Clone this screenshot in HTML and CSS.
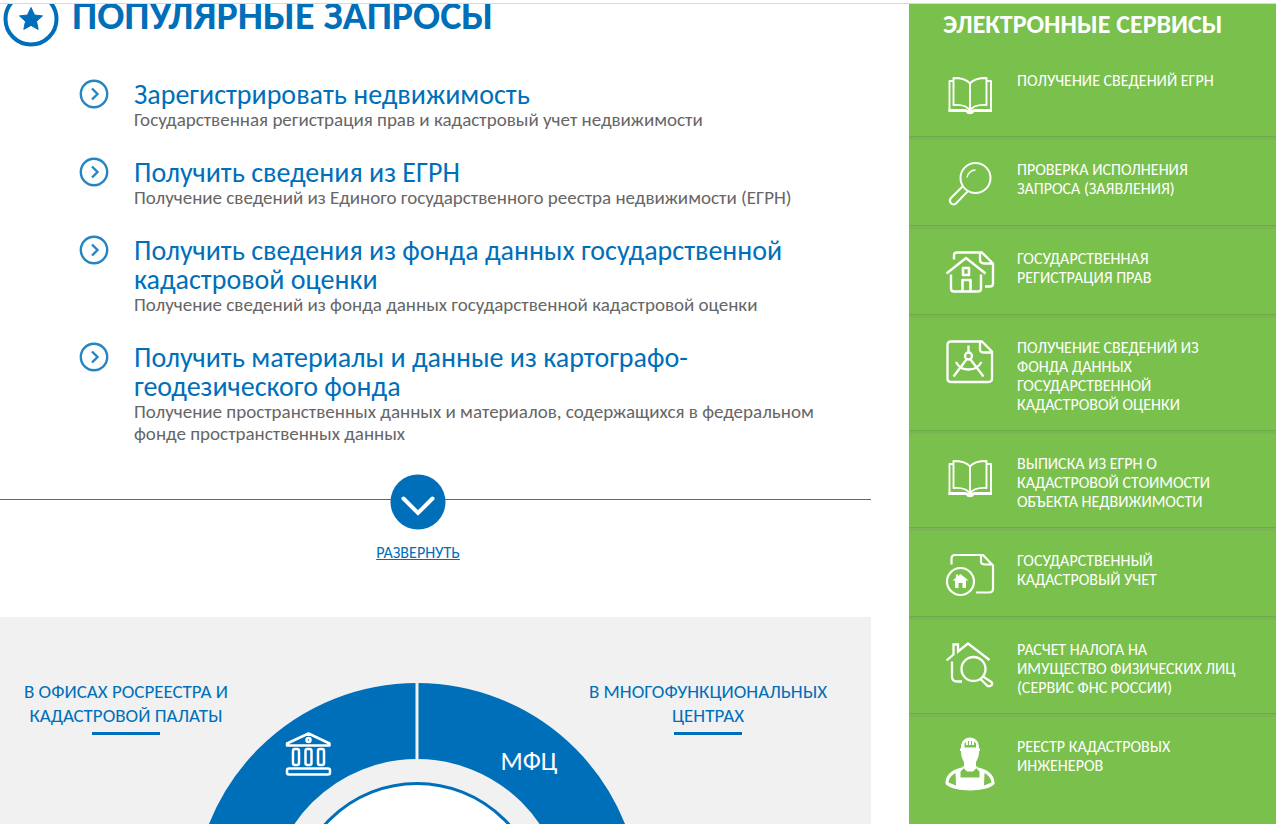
FILE: index.html
```html
<!DOCTYPE html>
<html lang="ru">
<head>
<meta charset="utf-8">
<title>Популярные запросы</title>
<link rel="stylesheet" href="styles.css">
</head>
<body>
<svg class="sprite" aria-hidden="true">
  <symbol id="go" viewBox="0 0 30 30"><circle cx="15" cy="15" r="13.2" fill="none" stroke="#2585c2" stroke-width="2.4"/><path d="M13 9.500l5.500 5.500-5.500 5.500" fill="none" stroke="#2585c2" stroke-width="2.4"/></symbol>
  <symbol id="book" viewBox="0 0 50 48"><path d="M25 12C22 8 16 6.500 8.500 6.500V33.500C16 33 22 34 25 39C28 34 34 33 41.500 33.500V6.500C34 6.500 28 8 25 12V39M8.500 9.500H4.500V39.500H46V9.500H41.500" fill="none" stroke="#fff" stroke-width="1.900" stroke-linejoin="round"/><path d="M3.500 37.500H21L25 39.500L29 37.500H47V40.500H29C28 43.500 22 43.500 21 40.500H3.500z" fill="#fff"/></symbol>
</svg>
<div class="page">
  <main class="main">
    <header class="head">
      <svg class="head-icon" viewBox="0 0 56 56" aria-hidden="true"><circle cx="28" cy="28" r="25.500" fill="none" stroke="#006fba" stroke-width="4"/><path d="M28 16.500l3.500 7.500 8 .900-6 5.500 1.700 8L28 34.400l-7.200 4 1.700-8-6-5.500 8-.900z" fill="#006fba" stroke="#006fba" stroke-linejoin="round"/></svg>
      <h1>ПОПУЛЯРНЫЕ ЗАПРОСЫ</h1>
    </header>
    <ul class="requests">
      <li><svg class="go"><use href="#go"/></svg><div><a href="#">Зарегистрировать недвижимость</a><p>Государственная регистрация прав и кадастровый учет недвижимости</p></div></li>
      <li><svg class="go"><use href="#go"/></svg><div><a href="#">Получить сведения из ЕГРН</a><p>Получение сведений из Единого государственного реестра недвижимости (ЕГРН)</p></div></li>
      <li><svg class="go"><use href="#go"/></svg><div><a href="#">Получить сведения из фонда данных государственной<br>кадастровой оценки</a><p>Получение сведений из фонда данных государственной кадастровой оценки</p></div></li>
      <li><svg class="go"><use href="#go"/></svg><div><a href="#">Получить материалы и данные из картографо-<br>геодезического фонда</a><p>Получение пространственных данных и материалов, содержащихся в федеральном<br>фонде пространственных данных</p></div></li>
    </ul>
    <div class="more">
      <div class="more-line">
        <svg class="more-icon" viewBox="0 0 56 56" aria-hidden="true"><circle cx="28" cy="28" r="27.500" fill="#006fba"/><path d="M13.500 24.500l14.500 14.500 14.500-14.500" fill="none" stroke="#fff" stroke-width="4" stroke-linecap="round"/></svg>
      </div>
      <a href="#">РАЗВЕРНУТЬ</a>
    </div>
    <section class="places">
      <svg class="ring" viewBox="0 0 450 141" role="img" aria-label="Способы обращения">
        <circle cx="225" cy="224" r="186" fill="none" stroke="#006fba" stroke-width="76"/>
        <path d="M225 0V76" stroke="#f1f1f1" stroke-width="3"/>
        <circle cx="225" cy="224" r="123.500" fill="#fff" stroke="#006fba" stroke-width="3"/>
        <g fill="none" stroke="#fff" stroke-width="2.500" stroke-linejoin="round">
          <path d="M95 62.500v-2L116.500 50.500l21 10v2z"/><circle cx="116.500" cy="57" r="2"/>
          <rect x="101" y="66" width="6" height="16" rx="2"/><rect x="113.500" y="66" width="6" height="16" rx="2"/><rect x="126" y="66" width="6" height="16" rx="2"/>
          <rect x="95" y="85.500" width="43" height="6" rx="2"/>
        </g>
        <text class="ring-text" x="337" y="87" text-anchor="middle">МФЦ</text>
      </svg>
      <div class="labels">
        <a href="#">В ОФИСАХ РОСРЕЕСТРА И КАДАСТРОВОЙ ПАЛАТЫ</a>
        <a href="#">В МНОГОФУНКЦИОНАЛЬНЫХ ЦЕНТРАХ</a>
      </div>
    </section>
  </main>
  <aside class="side">
    <h2>ЭЛЕКТРОННЫЕ СЕРВИСЫ</h2>
    <nav>
      <a href="#"><svg viewBox="0 0 50 48"><use href="#book"/></svg><span>ПОЛУЧЕНИЕ СВЕДЕНИЙ ЕГРН</span></a>
      <a href="#"><svg viewBox="0 0 50 48"><g fill="none" stroke="#fff" stroke-width="2"><circle cx="30.500" cy="17.500" r="15"/><path d="M22 17C22.500 13 26 9.500 30.500 9.500" stroke-width="1.500"/><path d="M17.500 26L6 37.500C3 41 7 46 11 43L22.500 31"/></g></svg><span>ПРОВЕРКА ИСПОЛНЕНИЯ<br>ЗАПРОСА (ЗАЯВЛЕНИЯ)</span></a>
      <a href="#"><svg viewBox="0 0 50 48"><g fill="none" stroke="#fff" stroke-width="2.400" stroke-linejoin="round"><path d="M9 10V6Q9 3 12 3H37L48 14V34Q48 37 45 37H40M35 3V10Q35 14 39 14H48"/><path d="M1.500 24L21 8.500L40.500 24M6 25V39Q6 42 9 42H33Q36 42 36 39V25"/><path d="M18 18.500h6v7h-6zM17.500 42V30.500h8V42" stroke-width="2.600"/></g></svg><span>ГОСУДАРСТВЕННАЯ<br>РЕГИСТРАЦИЯ ПРАВ</span></a>
      <a href="#"><svg viewBox="0 0 50 48"><g fill="none" stroke="#fff" stroke-width="2.300" stroke-linejoin="round"><path d="M6 3H37L47 13V40Q47 43.500 43 43.500H6Q2.500 43.500 2.500 40V6Q2.500 3 6 3zM35 3V11Q35 14 39 14H47"/><circle cx="23.500" cy="17.500" r="3.500"/><path d="M23.500 7V14M21.500 21L8.500 38M25.500 21L38.500 38M11 23.500C16 33.500 31 33.500 36.500 23.500"/></g></svg><span>ПОЛУЧЕНИЕ СВЕДЕНИЙ ИЗ<br>ФОНДА ДАННЫХ<br>ГОСУДАРСТВЕННОЙ<br>КАДАСТРОВОЙ ОЦЕНКИ</span></a>
      <a href="#"><svg viewBox="0 0 50 48"><use href="#book"/></svg><span>ВЫПИСКА ИЗ ЕГРН О<br>КАДАСТРОВОЙ СТОИМОСТИ<br>ОБЪЕКТА НЕДВИЖИМОСТИ</span></a>
      <a href="#"><svg viewBox="0 0 50 48"><g fill="none" stroke="#fff" stroke-width="2.200" stroke-linejoin="round"><path d="M6.500 13V7Q6.500 3.500 10 3.500H38L48 14V37Q48 41 44 41H31M36 3.500V10Q36 13 40 13H48"/><circle cx="15.500" cy="30" r="13.500"/></g><path d="M15.500 22.500L23.500 29H21V36.500H17.500V31.500H13.500V36.500H10V29H7.500L11 26V23H13V24.500z" fill="#fff"/></svg><span>ГОСУДАРСТВЕННЫЙ<br>КАДАСТРОВЫЙ УЧЕТ</span></a>
      <a href="#"><svg viewBox="0 0 50 48"><g fill="none" stroke="#fff" stroke-width="2.300"><path d="M1.500 20L8.500 14V4H13V11L23 3L44.500 19.500M7 21V36Q7 41 12 41H17"/><circle cx="28.500" cy="28.500" r="12"/><path d="M38 36L46.500 41.500C49 45 43.500 47 41.500 44.500L35 38"/></g></svg><span>РАСЧЕТ НАЛОГА НА<br>ИМУЩЕСТВО ФИЗИЧЕСКИХ ЛИЦ<br>(СЕРВИС ФНС РОССИИ)</span></a>
      <a href="#"><svg class="tall" viewBox="0 0 50 56"><path fill="#fff" fill-rule="evenodd" d="M16 11C16 4 20 .500 25 .500S34 4 34 11L35 12V14H34C34 21 31.500 23.500 31 25V30C40 31.500 50 36 49.500 47C42 55.500 8 55.500 .500 47C0 36 10 31.500 19 30V25C18.500 23.500 16 21 16 14H15V12zM19.500 6.500V10.500H31V6.500L29 4.500V8H27V4H26V8H24V4H23V8H21V5zM15.500 34.500V40.500H34.500V34.500L31 31H19zM10.500 36C7 38 4 41 3.500 45.500L11 48.500zM39.500 36L39 48.500L46.500 45.500C46 41 43 38 39.500 36z"/><path d="M17 29.500H33L28 34.500H22z" fill="#fff"/></svg><span>РЕЕСТР КАДАСТРОВЫХ<br>ИНЖЕНЕРОВ</span></a>
    </nav>
  </aside>
</div>
</body>
</html>
```
FILE: styles.css
```css
* { box-sizing: border-box; }
body {
  margin: 0;
  padding-top: 3px;
  overflow: hidden;
  background: #fff;
  color: #666;
  font-family: Calibri, Carlito, "Noto Sans", sans-serif;
}
a { color: #006fba; text-decoration: none; }
h1, h2, p, ul { margin: 0; padding: 0; font-weight: normal; }
ul { list-style: none; }
.sprite { display: none; }
.page {
  display: grid;
  grid-template-columns: minmax(0, 1fr) 367px;
  gap: 38px;
  height: 100vh;
  border-top: 1px solid #d9d9d9;
  overflow: hidden;
}
.main { display: flex; flex-direction: column; min-width: 0; }
.head {
  display: flex;
  align-items: flex-end;
  gap: 13px;
  height: 43px;
  padding-left: 3px;
  overflow: hidden;
}
.head-icon { flex: none; width: 56px; height: 56px; }
.head h1 { color: #006fba; font-size: 40px; font-weight: 700; line-height: 62px; }
.requests { display: grid; gap: 27px; padding: 33px 0 0 79px; }
.requests li { display: flex; gap: 25px; }
.go { flex: none; width: 30px; height: 30px; margin-top: -1px; }
.requests a { display: block; font-size: 28px; line-height: 29px; }
.requests p { font-size: 19px; line-height: 22px; }
.more { text-align: center; padding-top: 29px; }
.more-line {
  padding-right: 35px;
  background: linear-gradient(#666, #666) 0 25px / 100% 1px no-repeat;
}
.more-icon { width: 56px; height: 56px; display: inline-block; vertical-align: top; }
.more a {
  display: block;
  margin: 13px 35px 0 0;
  font-size: 16px;
  line-height: 20px;
  text-decoration: underline;
}
.places { display: grid; flex: 1; margin-top: 54px; background: #f1f1f1; }
.ring { grid-area: 1 / 1; width: 450px; height: 141px; margin: 66px 0 0 192px; }
.ring-text { fill: #fff; font-size: 26px; }
.labels { grid-area: 1 / 1; display: flex; justify-content: space-between; padding: 63px 38px 0 1px; }
.labels a { width: 250px; font-size: 19px; line-height: 24px; text-align: center; }
.labels a::after { content: ""; display: block; width: 68px; height: 3px; margin: 4px auto 0; background: #006fba; }
.side { background: #7ac04c; color: #fff; }
.side h2 { padding: 4px 0 11px 34px; font-size: 26px; font-weight: 700; line-height: 32px; }
.side a {
  display: flex;
  gap: 22px;
  padding: 20px 10px 17px 36px;
  color: #fff;
  font-size: 16px;
  line-height: 19px;
  border-bottom: 3px solid #7bb655;
  box-shadow: inset 0 -1px #6dab44;
}
.side a:last-child { border: 0; box-shadow: none; }
.side svg { flex: none; width: 50px; height: 49px; }
.side .tall { height: 56px; }
```
